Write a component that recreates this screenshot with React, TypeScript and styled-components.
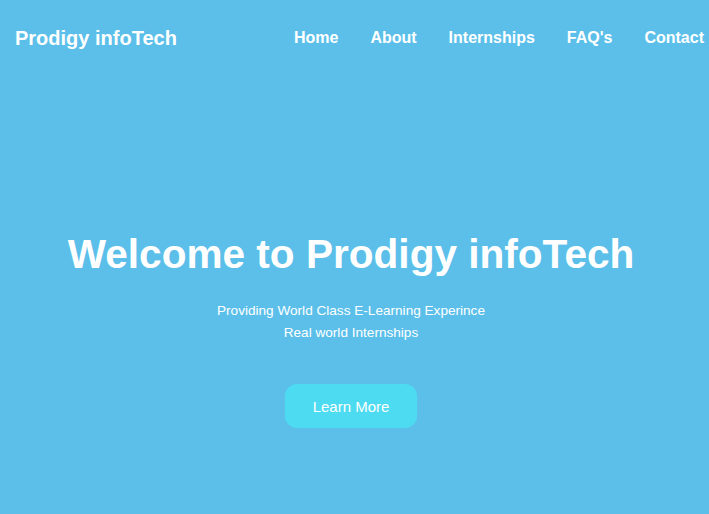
import React from 'react';
import styled, { createGlobalStyle } from 'styled-components';

const GlobalStyle = createGlobalStyle`
  html, body {
    margin: 0;
    padding: 0;
    background: #5bbfea;
    font-family: Arial, "Liberation Sans", sans-serif;
    color: #fff;
  }
`;

const Page = styled.div`
  min-height: 514px;
  background: #5bbfea;
`;

const Navbar = styled.nav`
  display: flex;
  align-items: center;
  justify-content: space-between;
  height: 76px;
  padding: 0 5px 0 15px;
`;

const Logo = styled.div`
  font-size: 20px;
  font-weight: bold;
`;

const NavLinks = styled.ul`
  display: flex;
  gap: 32px;
  list-style: none;
  margin: 0;
  padding: 0;
`;

const NavLink = styled.li`
  font-size: 16px;
  font-weight: bold;
  cursor: pointer;
`;

const Hero = styled.section`
  display: flex;
  flex-direction: column;
  align-items: center;
  padding: 155px 7px 0 0;
  text-align: center;
`;

const Title = styled.h1`
  font-size: 40.6px;
  font-weight: bold;
  margin: 0;
  line-height: 46px;
`;

const Subtitle = styled.p`
  font-size: 13.6px;
  line-height: 22px;
  margin: 23px 0 0;
`;

const LearnButton = styled.button`
  margin-top: 40px;
  width: 132px;
  height: 44px;
  border: none;
  border-radius: 12px;
  background: #4ddbf1;
  color: #fff;
  font-family: Arial, "Liberation Sans", sans-serif;
  font-size: 15px;
  cursor: pointer;
`;

const links = ['Home', 'About', 'Internships', "FAQ's", 'Contact'];

export default function App() {
  return (
    <Page>
      <GlobalStyle />
      <Navbar>
        <Logo>Prodigy infoTech</Logo>
        <NavLinks>
          {links.map((l) => (
            <NavLink key={l}>{l}</NavLink>
          ))}
        </NavLinks>
      </Navbar>
      <Hero>
        <Title>Welcome to Prodigy infoTech</Title>
        <Subtitle>
          Providing World Class E-Learning Experince
          <br />
          Real world Internships
        </Subtitle>
        <LearnButton>Learn More</LearnButton>
      </Hero>
    </Page>
  );
}
